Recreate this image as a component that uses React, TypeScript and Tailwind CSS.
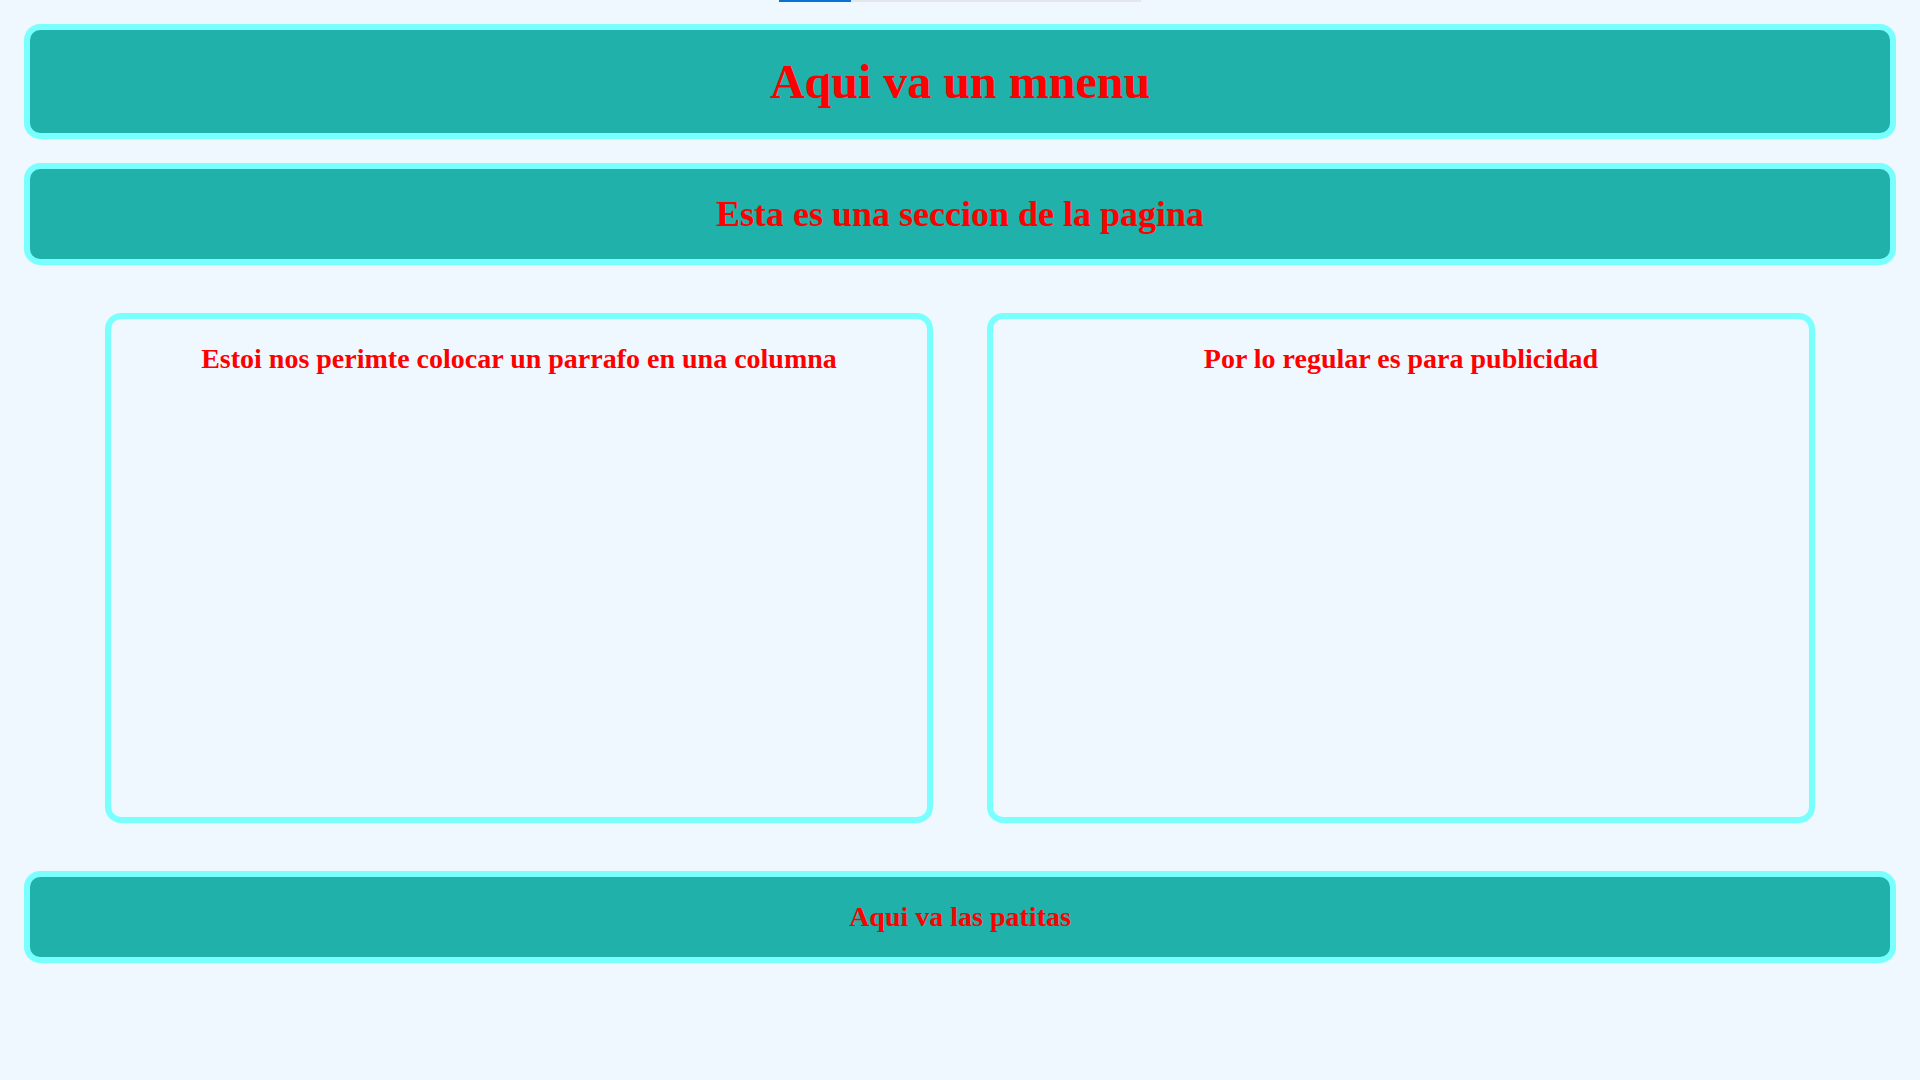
const serif = 'font-["Liberation_Serif","Times_New_Roman",serif]'

function Banner({ text, height, size }: { text: string; height: string; size: string }) {
  return (
    <div
      className={`flex items-center justify-center rounded-[16px] border-[6px] border-[#7affff] bg-[#20b2aa] ${height}`}
    >
      <h1 className={`font-bold text-[#ff0000] leading-normal ${size}`}>{text}</h1>
    </div>
  )
}

function Column({ text }: { text: string }) {
  return (
    <div className="h-[510px] rounded-[16px] border-[6px] border-[#7affff] pt-[19px] text-center">
      <p className="text-[28px] font-bold leading-normal text-[#ff0000]">{text}</p>
    </div>
  )
}

export default function App() {
  return (
    <div className={`min-h-screen bg-[#f0f8ff] px-6 ${serif}`}>
      {/* barra de carga */}
      <div className="flex h-[2px] justify-center">
        <div className="flex w-[362px]">
          <div className="w-[72px] bg-[#0b72d0]" />
          <div className="flex-1 bg-[#e3e6ea]" />
        </div>
      </div>

      <div className="mt-[22px]">
        <Banner text="Aqui va un mnenu" height="h-[115px]" size="text-[48px]" />
      </div>

      <div className="mt-6">
        <Banner text="Esta es una seccion de la pagina" height="h-[102px]" size="text-[36px]" />
      </div>

      <div className="mt-12 grid grid-cols-2 gap-[54px] px-[81px]">
        <Column text="Estoi nos perimte colocar un parrafo en una columna" />
        <Column text="Por lo regular es para publicidad" />
      </div>

      <div className="mt-12">
        <Banner text="Aqui va las patitas" height="h-[92px]" size="text-[28px]" />
      </div>
    </div>
  )
}
